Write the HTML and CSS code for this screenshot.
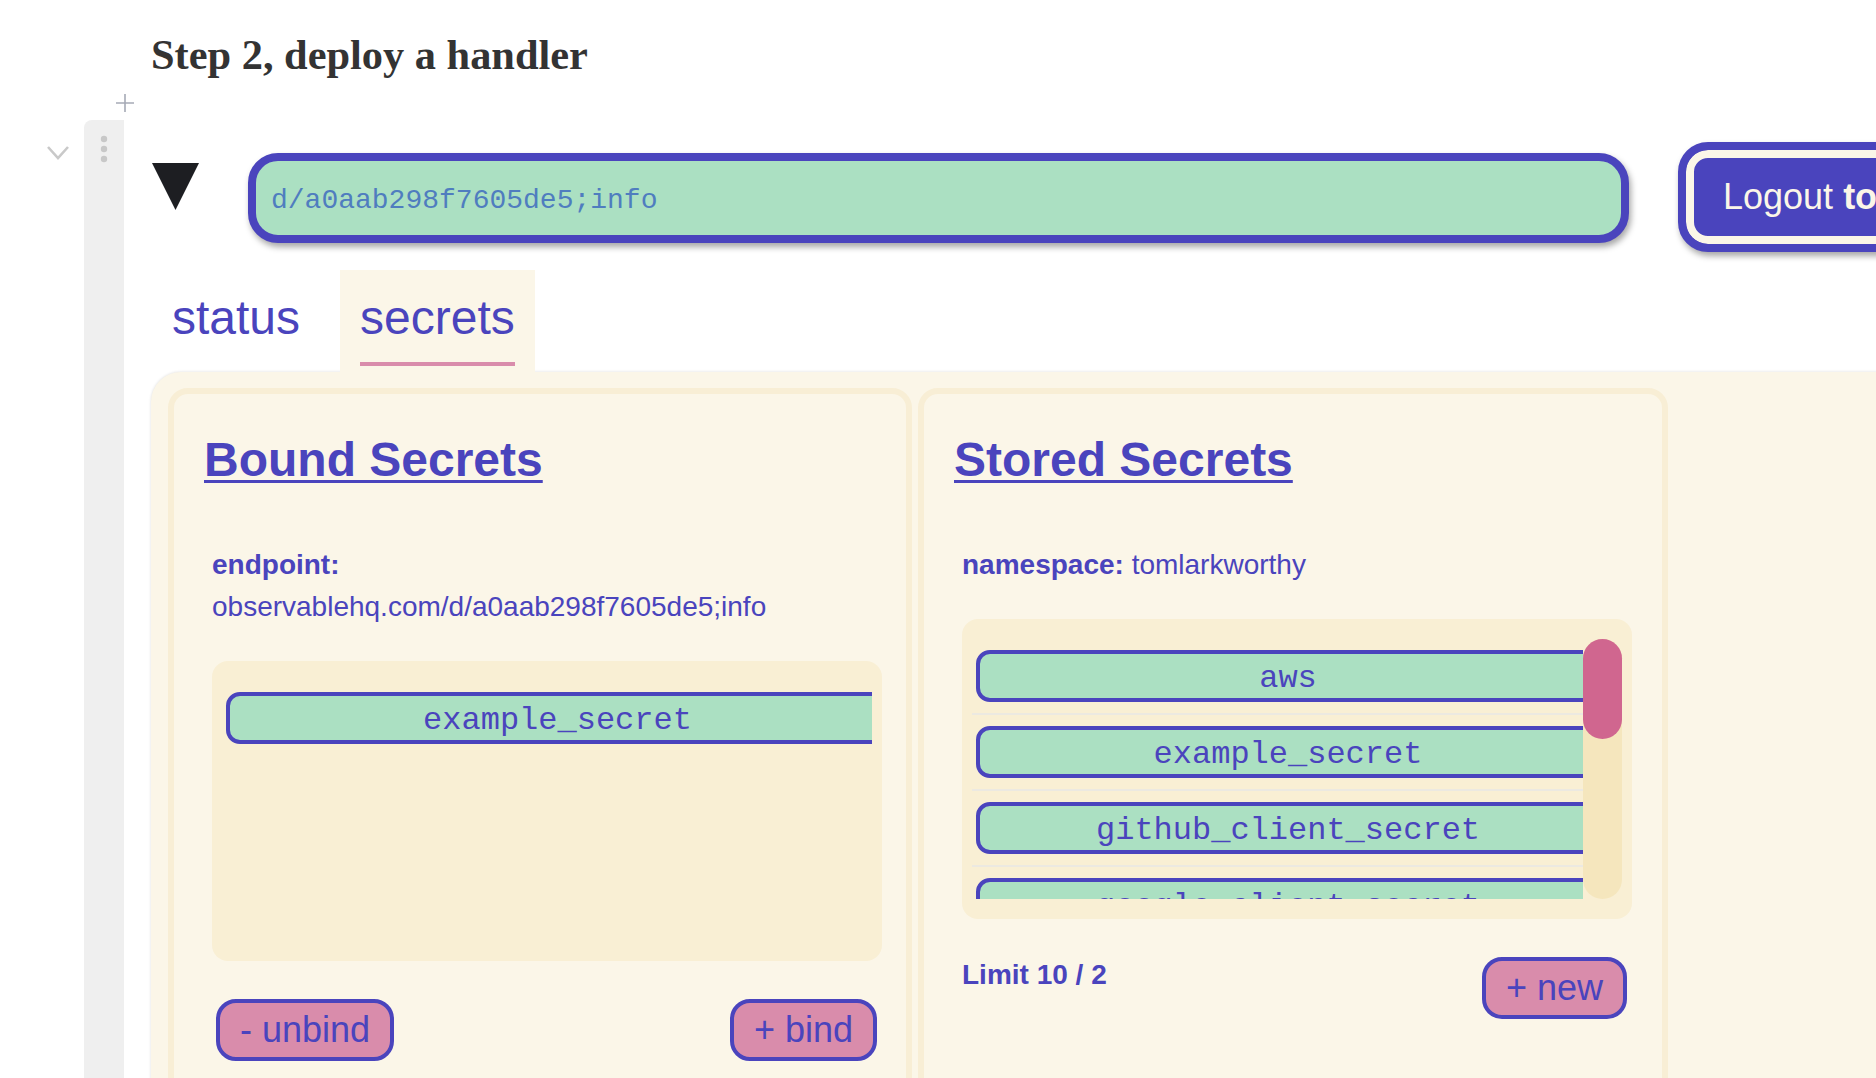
FILE: index.html
```html
<!DOCTYPE html>
<html lang="en">
<head>
<meta charset="utf-8">
<title>Step 2, deploy a handler</title>
<link rel="stylesheet" href="styles.css">
</head>
<body>
  <h2 class="title">Step 2, deploy a handler</h2>
  <div class="add-row">
    <svg width="18" height="18" viewBox="0 0 18 18"><path d="M9 0V18M0 9H18" stroke="#a6aab6" stroke-width="1.6" fill="none"/></svg>
  </div>
  <div class="cell">
    <div class="gutter">
      <div class="collapse">
        <svg width="24" height="15" viewBox="0 0 24 15"><polyline points="2,2 12,13 22,2" fill="none" stroke="#c9c9c9" stroke-width="2.6"/></svg>
      </div>
      <div class="handle">
        <svg width="8" height="28" viewBox="0 0 8 28"><circle cx="4" cy="4" r="3.2" fill="#c8c8c8"/><circle cx="4" cy="14" r="3.2" fill="#c8c8c8"/><circle cx="4" cy="24" r="3.2" fill="#c8c8c8"/></svg>
      </div>
    </div>
    <div class="main">
      <div class="toprow">
        <svg class="toggle" width="47" height="47" viewBox="0 0 47 47"><polygon points="0,0 47,0 23.5,47" fill="#1d1e22"/></svg>
        <div class="endpoint-field">d/a0aab298f7605de5;info</div>
        <button class="logout">Logout <b>tomlarkworthy</b></button>
      </div>
      <div class="tabs">
        <div class="tab"><span class="tab-label">status</span></div>
        <div class="tab active"><span class="tab-label">secrets</span></div>
      </div>
      <div class="panel">
        <div class="cards">
          <section class="card card-bound">
            <h3 class="card-title">Bound Secrets</h3>
            <div class="card-body">
              <div class="meta"><b>endpoint:</b></div>
              <div class="meta">observablehq.com/d/a0aab298f7605de5;info</div>
              <div class="listbox">
                <div class="viewport">
                  <div class="row"><div class="secret">example_secret</div></div>
                </div>
              </div>
              <div class="actions">
                <button class="pill">- unbind</button>
                <button class="pill">+ bind</button>
              </div>
            </div>
          </section>
          <section class="card card-stored">
            <h3 class="card-title">Stored Secrets</h3>
            <div class="card-body">
              <div class="meta"><b>namespace:</b> tomlarkworthy</div>
              <div class="listbox">
                <div class="viewport">
                  <div class="row"><div class="secret">aws</div></div>
                  <div class="row"><div class="secret">example_secret</div></div>
                  <div class="row"><div class="secret">github_client_secret</div></div>
                  <div class="row"><div class="secret">google_client_secret</div></div>
                </div>
                <div class="track"><div class="thumb"></div></div>
              </div>
              <div class="actions">
                <div class="limit">Limit 10 / 2</div>
                <button class="pill">+ new</button>
              </div>
            </div>
          </section>
        </div>
      </div>
    </div>
  </div>
</body>
</html>
```
FILE: styles.css
```css
* { box-sizing: border-box; }

html, body {
  margin: 0;
  padding: 0;
  background: #ffffff;
  overflow: hidden;
}

body {
  width: 1876px;
  height: 1078px;
  font-family: "Liberation Sans", Arial, sans-serif;
  color: #4a44bd;
}

.title {
  margin: 31px 0 0 151px;
  font: 700 42.4px/48px "Liberation Serif", "Times New Roman", serif;
  color: #333333;
}

.add-row {
  height: 41px;
  padding: 15px 0 0 116px;
}
.add-row svg { display: block; }

.cell {
  display: flex;
  align-items: stretch;
  height: 1000px;
}

.gutter {
  display: flex;
  flex: none;
  width: 152px;
}

.collapse {
  width: 84px;
  padding: 25px 0 0 46px;
}
.collapse svg { display: block; }

.handle {
  width: 40px;
  background: #efefef;
  border-top-left-radius: 8px;
  display: flex;
  justify-content: center;
  align-items: flex-start;
  padding-top: 15px;
}

.main {
  flex: none;
  width: 1760px;
  padding-top: 22px;
}

.toprow {
  display: flex;
  align-items: flex-start;
}

.toggle {
  flex: none;
  display: block;
  margin: 21px 0 0 0;
}

.endpoint-field {
  flex: none;
  width: 1381px;
  height: 90px;
  margin: 11px 0 0 49px;
  border: 8px solid #4a44bd;
  border-radius: 30px;
  background: #abe0c2;
  box-shadow: 2px 4px 6px rgba(0, 0, 0, 0.35);
  padding: 5px 0 0 15px;
  font: 28px/70px "Liberation Mono", "Courier New", monospace;
  color: #4f7dbf;
  white-space: nowrap;
}

.logout {
  flex: none;
  margin: 0 0 0 49px;
  height: 110px;
  padding: 0 35px 0 37px;
  border: 8px solid #4a44bd;
  border-radius: 30px;
  background: #4a44bd;
  box-shadow: inset 0 0 0 8px #fbf6e8, 2px 4px 6px rgba(0, 0, 0, 0.35);
  font: 36px/94px "Liberation Sans", Arial, sans-serif;
  color: #fbf6e8;
  white-space: nowrap;
  text-align: left;
}

.tabs {
  display: flex;
  margin-top: 18px;
}

.tab {
  padding: 20px 20px 6px;
  margin-right: 20px;
  font-size: 48px;
  line-height: 55px;
}

.tab-label {
  display: block;
  padding-bottom: 17px;
  border-bottom: 4px solid transparent;
}

.tab.active {
  background: #fbf6e8;
}
.tab.active .tab-label {
  border-bottom-color: #d98cab;
}

.panel {
  width: 1760px;
  height: 760px;
  margin-left: -1px;
  background: #fbf6e8;
  border-radius: 30px;
  box-shadow: 0 0 3px rgba(0, 0, 0, 0.14);
  padding: 16px 17px;
}

.cards {
  display: flex;
  gap: 6px;
  align-items: stretch;
  height: 900px;
}

.card {
  border: 6px solid #f8eed5;
  border-radius: 20px;
  background: #fbf6e8;
  padding: 38px 28px 40px;
}
.card-bound { width: 744px; }
.card-stored { width: 750px; }

.card-title {
  margin: 0 0 0 2px;
  font: 700 48px/55px "Liberation Sans", Arial, sans-serif;
  text-decoration: underline;
  text-decoration-thickness: 3px;
  text-underline-offset: 4px;
}

.card-body {
  margin: 57px 0 0 10px;
  width: 670px;
}

.meta {
  font-size: 28px;
  line-height: 42px;
  white-space: nowrap;
}

.listbox {
  display: flex;
  margin-top: 33px;
  width: 670px;
  height: 300px;
  padding: 20px 10px;
  background: #f9efd4;
  border-radius: 16px;
}

.viewport {
  flex: 1;
  overflow: hidden;
}

.row {
  padding: 11px 0 11px 4px;
}
.row + .row {
  border-top: 2px solid #ece9e1;
}

.secret {
  width: calc(100% + 17px);
  height: 52px;
  padding-top: 6px;
  border: 4px solid #4a44bd;
  border-radius: 14px;
  background: #abe0c2;
  font: 32px/38px "Liberation Mono", "Courier New", monospace;
  text-align: center;
  white-space: nowrap;
}

.track {
  flex: none;
  width: 39px;
  background: #f5e6bd;
  border-radius: 20px;
}

.thumb {
  height: 100px;
  background: #d0668f;
  border-radius: 20px;
}

.actions {
  display: flex;
  justify-content: space-between;
  align-items: flex-start;
  margin-top: 34px;
  padding: 0 5px 0 4px;
}

.card-stored .actions {
  padding-left: 0;
}

.pill {
  margin-top: 4px;
  height: 62px;
  padding: 0 20px;
  border: 4px solid #4a44bd;
  border-radius: 20px;
  background: #d98cab;
  font: 36px/54px "Liberation Sans", Arial, sans-serif;
  color: #4a44bd;
}

.limit {
  font-weight: 700;
  font-size: 28px;
  line-height: 42px;
  margin-top: 1px;
}
```
